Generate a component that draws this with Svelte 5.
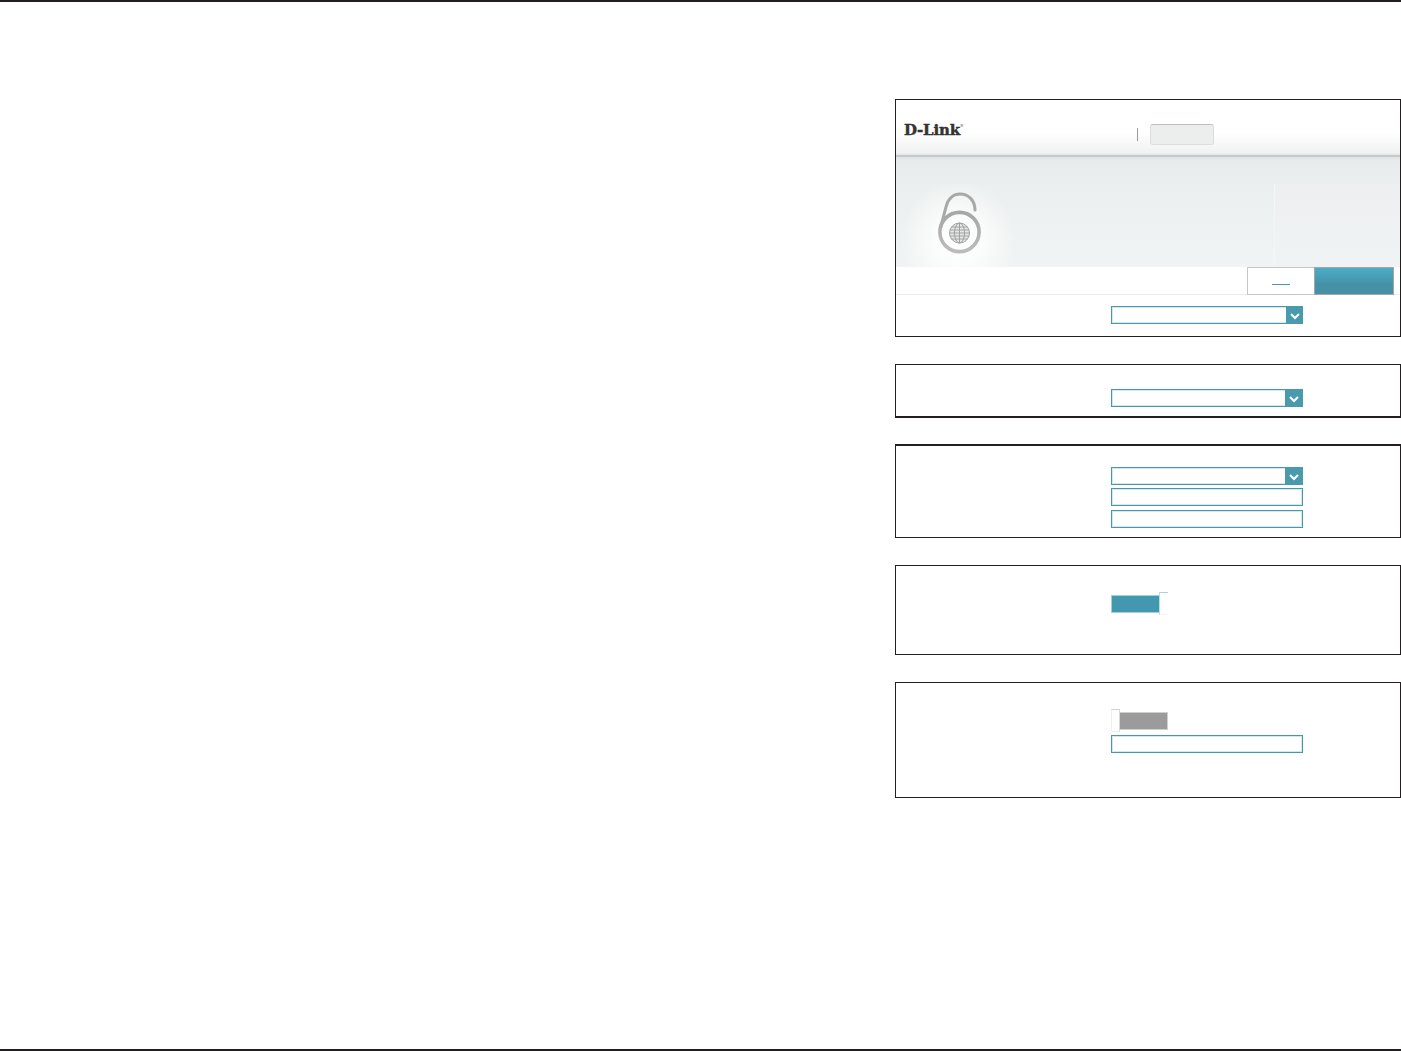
<script>
  const gridLines = [-6, -3, 0, 3, 6];
</script>

{#snippet select(wide = false)}
  <div class="select">
    <span class="select-value"></span>
    <span class="arrow" class:wide>
      <svg width="10" height="8" viewBox="0 0 10 8" aria-hidden="true">
        <path d="M1 2 L5 6 L9 2" fill="none" stroke="#fff" stroke-width="2" />
      </svg>
    </span>
  </div>
{/snippet}

<div class="page">
  <div class="rule top"></div>

  <main class="column">
    <section class="panel first">
      <header class="head">
        <div class="logo">D-Link<sup>®</sup></div>
        <span class="divider"></span>
        <span class="tab"></span>
      </header>
      <div class="hero">
        <div class="hero-left">
          <svg width="52" height="66" viewBox="0 0 52 66" aria-hidden="true">
            <defs>
              <linearGradient id="lockStroke" x1="0" y1="0" x2="0" y2="1">
                <stop offset="0" stop-color="#a6a6a6" />
                <stop offset="1" stop-color="#bcbcbc" />
              </linearGradient>
            </defs>
            <g fill="none">
              <path d="M6.5 37 L12 16 C14 7 20 3 26 3 C35 3 41 10 41 19" stroke="#a8a8a8" stroke-width="3" stroke-linecap="round" />
              <circle cx="25.5" cy="41" r="19.6" stroke="url(#lockStroke)" stroke-width="3.6" />
              <g stroke-width="1" stroke="#a2a2a2">
                <circle cx="25.5" cy="42" r="10" fill="#e6e7e7" />
                {#each gridLines as d}
                  <path d={`M${25.5 - Math.sqrt(100 - d * d)} ${42 + d} H${25.5 + Math.sqrt(100 - d * d)}`} />
                {/each}
                <path d="M25.5 32 V52" />
                <ellipse cx="25.5" cy="42" rx="5" ry="10" />
              </g>
            </g>
          </svg>
        </div>
        <div class="hero-right"></div>
      </div>
      <div class="toolbar">
        <button class="btn cancel"><span class="cancel-mark"></span></button>
        <button class="btn save"></button>
      </div>
      <div class="body row-first">
        {@render select(false)}
      </div>
    </section>

    <section class="panel second">
      <div class="body">{@render select(true)}</div>
    </section>

    <section class="panel third">
      <div class="body stack">
        {@render select(true)}
        <input class="field" type="text" />
        <input class="field gap-lg" type="text" />
      </div>
    </section>

    <section class="panel fourth">
      <div class="body">
        <div class="toggle">
          <span class="bar on"></span>
          <span class="handle on"></span>
        </div>
      </div>
    </section>

    <section class="panel fifth">
      <div class="body">
        <div class="toggle">
          <span class="handle off"></span>
          <span class="bar off"></span>
        </div>
        <input class="field after-toggle" type="text" />
      </div>
    </section>
  </main>

  <div class="rule bottom"></div>
</div>

<style>
  :global(body) {
    margin: 0;
    background: #fff;
  }
  * {
    box-sizing: border-box;
  }
  .page {
    width: 1401px;
    height: 1051px;
    display: flex;
    flex-direction: column;
    overflow: hidden;
    background: #fff;
    font-family: "Liberation Sans", sans-serif;
  }
  .rule {
    flex: none;
    height: 2px;
    background: #231f20;
  }
  .bottom {
    margin-top: auto;
  }
  .column {
    width: 506px;
    margin: 97px 0 0 895px;
    display: flex;
    flex-direction: column;
  }
  .panel {
    border: 1px solid #231f20;
    background: #fff;
    flex: none;
  }
  .first {
    height: 238px;
  }
  .second {
    height: 54px;
    margin-top: 27px;
    border-bottom-width: 2px;
  }
  .third {
    height: 94px;
    margin-top: 26px;
    border-top-width: 2px;
  }
  .fourth {
    height: 90px;
    margin-top: 27px;
  }
  .fifth {
    height: 116px;
    margin-top: 27px;
  }

  .head {
    height: 57px;
    padding: 24px 0 0 8px;
    display: flex;
    align-items: flex-start;
    background: linear-gradient(#fff 0, #fff 32px, #f0f1f1 53px, #e6e8e8 54.5px, #c7cacb 55px, #c7cacb 57px);
  }
  .logo {
    width: 233px;
    height: 12px;
    font-family: "DejaVu Serif", serif;
    font-weight: 700;
    font-size: 15px;
    line-height: 12px;
    letter-spacing: -0.2px;
    color: #333;
    -webkit-text-stroke: 0.45px #333;
    white-space: nowrap;
  }
  .logo sup {
    font-size: 4px;
    line-height: 0;
    vertical-align: 8px;
    font-weight: 400;
    -webkit-text-stroke: 0;
  }
  .divider {
    width: 1px;
    height: 13px;
    margin-top: 4px;
    background: #9a9a9a;
  }
  .tab {
    width: 64px;
    height: 21px;
    margin-left: 12px;
    background: #eceeee;
    border: 1px solid #dcdede;
    border-top-color: #bdbfbf;
    border-radius: 3px;
  }

  .hero {
    height: 110px;
    padding-top: 27px;
    display: flex;
    background: linear-gradient(#dfe3e4 0, #e8ecec 4px, #ebeeee 27px);
  }
  .hero-left {
    width: 378px;
    padding: 7px 0 0 38px;
    background:
      radial-gradient(ellipse 58px 62px at 62px 58px, #fff 0, #fbfcfc 40%, rgba(255, 255, 255, 0) 100%),
      linear-gradient(#ecefef, #f1f4f4);
  }
  .hero-left svg {
    display: block;
  }
  .hero-right {
    flex: 1;
    border-left: 1px solid #f4f6f6;
    background: linear-gradient(#edeff1, #f0f3f4);
  }

  .toolbar {
    height: 28px;
    display: flex;
    justify-content: flex-end;
    padding-right: 6px;
    border-bottom: 1px solid #ececec;
    background: #fff;
  }
  .btn {
    display: block;
    height: 28px;
    padding: 0;
    border-radius: 0;
    flex: none;
  }
  .cancel {
    width: 67px;
    background: #fff;
    border: 1px solid #c6c6c6;
    border-right: 0;
    display: flex;
    justify-content: center;
    align-items: flex-end;
    padding: 0 0 9px 0;
  }
  .cancel-mark {
    display: block;
    width: 18px;
    height: 1px;
    background: #4a9aae;
  }
  .save {
    width: 80px;
    background: linear-gradient(#4aadc7, #4690a8 65%);
    border: 1px solid #a5a5a8;
  }

  .body {
    padding: 24px 0 0 215px;
  }
  .row-first {
    padding-top: 11px;
  }
  .third .body {
    padding-top: 21px;
  }
  .fourth .body,
  .fifth .body {
    padding-top: 26px;
  }
  .stack {
    display: flex;
    flex-direction: column;
  }

  .select {
    width: 192px;
    height: 18px;
    display: flex;
    border: 1px solid #4698ac;
    box-shadow: inset 0 0 0 1px rgba(70, 152, 172, 0.22);
    background: #fff;
  }
  .select-value {
    flex: 1;
  }
  .arrow {
    width: 17px;
    margin: -1px -1px -1px 0;
    padding-top: 1px;
    display: flex;
    align-items: center;
    justify-content: center;
    background: #4a9aae;
  }
  .arrow.wide {
    width: 18px;
  }
  .arrow svg {
    display: block;
  }

  .field {
    display: block;
    width: 192px;
    height: 18px;
    margin: 3px 0 0;
    padding: 0;
    border: 1px solid #4698ac;
    box-shadow: inset 0 0 0 1px rgba(70, 152, 172, 0.22);
    border-radius: 0;
    background: #fff;
    outline: 0;
  }
  .gap-lg {
    margin-top: 4px;
  }
  .after-toggle {
    margin-top: 3px;
  }

  .toggle {
    display: flex;
    width: 57px;
    height: 23px;
    align-items: center;
  }
  .bar {
    display: block;
    width: 49px;
    height: 18px;
    flex: none;
  }
  .bar.on {
    background: #4298ae;
    border: 1px solid #a3d0db;
  }
  .bar.off {
    background: #9b9b9b;
    border: 1px solid #cfcfcf;
  }
  .handle {
    display: block;
    width: 9px;
    height: 23px;
    flex: none;
    background: #fff;
    position: relative;
    z-index: 1;
    border-style: solid;
  }
  .handle.on {
    margin-left: -1px;
    border-width: 1px 0 1px 1px;
    border-color: #a8d4de #fff #eef6f8 #bcdde5;
  }
  .handle.off {
    margin-right: -1px;
    border-width: 1px;
    border-color: #cfcfcf #d8d8d8 #efefef #efefef;
  }
</style>
